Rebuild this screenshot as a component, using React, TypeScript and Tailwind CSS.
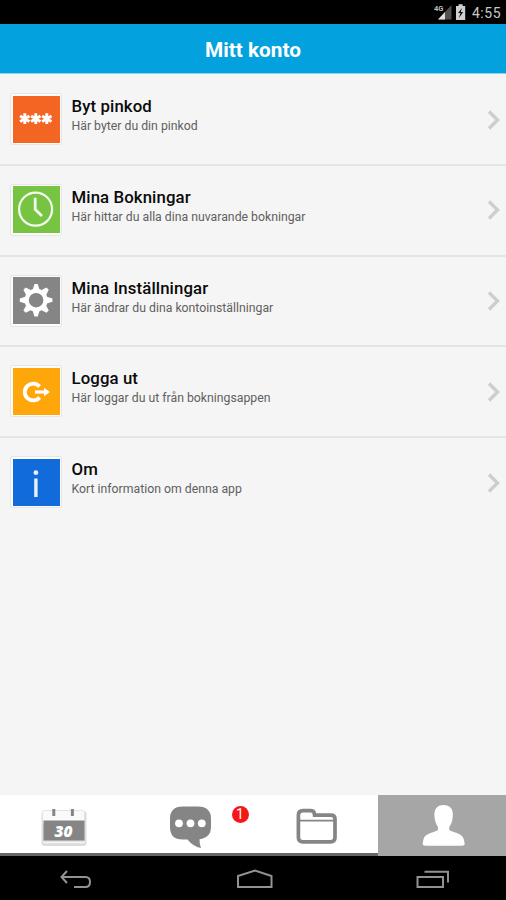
import React from "react";

type Item = { title: string; text: string; color: string; icon: React.ReactNode };

const Stars = () => (
  <svg viewBox="0 0 47 47" className="size-[47px]" stroke="#fff" strokeWidth="2.9">
    {[11.8, 22.8, 33.8].map((x) => (
      <path key={x} d={`M${x} 17.3v10.8M${x - 4.7} 20l9.4 5.4M${x - 4.7} 25.4l9.4-5.4`} />
    ))}
  </svg>
);

const Clock = () => (
  <svg viewBox="0 0 47 47" className="size-[47px]" fill="none" stroke="#f4fbef" strokeWidth="2.2">
    <circle cx="22.6" cy="23.2" r="16.5" />
    <path d="M22.2 11.7V23.5l6.8 6.6" strokeWidth="2.8" />
  </svg>
);

const Gear = () => (
  <svg viewBox="0 0 47 47" className="size-[47px]">
    <g fill="#fff" transform="translate(23.1 23.2)">
      {[0, 45, 90, 135, 180, 225, 270, 315].map((a) => (
        <path key={a} d="M-3.6-10L-1.6-16.3H1.6L3.6-10z" transform={`rotate(${a})`} />
      ))}
      <circle r="9.4" fill="none" stroke="#fff" strokeWidth="4.2" />
    </g>
  </svg>
);

const Logout = () => (
  <svg viewBox="0 0 47 47" className="size-[47px]" fill="none" stroke="#fff">
    <path d="M26.6 18.6A8.4 8.4 0 1 0 26.6 29.4" strokeWidth="3.9" />
    <path d="M22 24h10" strokeWidth="3.2" />
    <path d="M31 19.8l6 4.2-6 4.2z" fill="#fff" stroke="none" />
  </svg>
);

const Info = () => (
  <svg viewBox="0 0 47 47" className="size-[47px]" fill="#e6f1ff">
    <circle cx="22.9" cy="13.7" r="2.4" />
    <rect x="21.2" y="19.5" width="3.4" height="18.5" />
  </svg>
);

const items: Item[] = [
  { title: "Byt pinkod", text: "Här byter du din pinkod", color: "bg-[#f26522]", icon: <Stars /> },
  { title: "Mina Bokningar", text: "Här hittar du alla dina nuvarande bokningar", color: "bg-[#76c442]", icon: <Clock /> },
  { title: "Mina Inställningar", text: "Här ändrar du dina kontoinställningar", color: "bg-[#858585]", icon: <Gear /> },
  { title: "Logga ut", text: "Här loggar du ut från bokningsappen", color: "bg-[#ffa60a]", icon: <Logout /> },
  { title: "Om", text: "Kort information om denna app", color: "bg-[#116bdb]", icon: <Info /> },
];

const Row = ({ item, last }: { item: Item; last: boolean }) => (
  <li className={`flex h-[90.8px] items-start pl-[10px] pt-[18px] ${last ? "" : "border-b-2 border-[#e4e4e4]"}`}>
    <div className="size-[52px] shrink-0 rounded-[2px] border border-[#e6e6e6] bg-[#fcfcfc] pl-[2px] pt-[1.5px]">
      <div className={`size-[47px] ${item.color}`}>{item.icon}</div>
    </div>
    <div className="min-w-0 flex-1 whitespace-nowrap pl-[9.5px] pt-[3px]">
      <h2 className="text-[16.8px] font-medium leading-[20px] tracking-[0.1px] text-[#0a0a0a]">{item.title}</h2>
      <p className="text-[12.27px] leading-[20px] text-[#5f5f5f]">{item.text}</p>
    </div>
    <svg viewBox="0 0 14 22" className="mr-[5px] mt-[15.5px] h-[22px] w-[14px]" fill="none" stroke="#cecece" strokeWidth="3.4">
      <path d="M2 2.5l8.5 8.5L2 19.5" />
    </svg>
  </li>
);

const StatusBar = () => (
  <div className="flex h-6 shrink-0 items-center justify-end bg-black pr-[5px] text-[#c9c9c9]">
    <svg viewBox="0 0 36 20" className="h-[20px] w-[36px]">
      <path d="M17.5 3v14.5H4z" fill="#505050" />
      <path d="M11 10v7.5H4z" fill="#ddd" />
      <text x="0" y="9" fontSize="7.5" fontWeight="700" fill="#bbb">4G</text>
      <path d="M22 4h2.6V2.2h4V4h2.6v14H22z" fill="#d0d0d0" />
      <path d="M28 6l-4 5h2.4L25 16l4.2-6h-2.5z" fill="#111" />
    </svg>
    <span className="ml-[2px] pt-px text-[14px] leading-6 tracking-[0.5px]">4:55</span>
  </div>
);

const TabBar = () => (
  <nav className="flex h-[61px] shrink-0 bg-white">
    <div className="flex w-[378px] border-b-[3px] border-[#666]">
      <div className="flex w-[126px] justify-center pl-[2px] pt-[11px]">
        <svg viewBox="0 0 48 42" className="h-[42px] w-[48px]">
          <rect x="1.5" y="5" width="45" height="35" rx="3" fill="#dcdcdc" />
          <rect x="2.5" y="4.5" width="42" height="14" rx="2" fill="#fafafa" stroke="#e2e2e2" />
          <path d="M3.5 14.5h41V34.5h-41z" fill="#858585" />
          <path d="M3 36.5h42" stroke="#f5f5f5" strokeWidth="1.5" />
          <path d="M13.8 3v7M32.4 3v7" stroke="#858585" strokeWidth="3" />
          <text x="23.4" y="30.8" fontSize="15.5" fontWeight="900" fontStyle="italic" textAnchor="middle" fill="#fff" fontFamily="Open Sans, sans-serif">30</text>
        </svg>
      </div>
      <div className="relative flex w-[126px] justify-center pl-px pt-[11px]">
        <svg viewBox="0 0 44 44" className="h-[44px] w-[44px]">
          <path d="M14.5 .5H30Q43 .5 43 13V21Q43 31.5 31.5 33.2Q31.5 39 33 42Q25 40.5 19.5 33.5H14.5Q2 33.5 2 21V13Q2 .5 14.5 .5z" fill="#858585" />
          <g fill="#fff"><circle cx="11" cy="17.3" r="3.9" /><circle cx="22.5" cy="17.3" r="3.9" /><circle cx="33.8" cy="17.3" r="3.9" /></g>
        </svg>
        <span className="absolute left-[105.5px] top-[11px] flex size-[17px] items-center justify-center rounded-full bg-[#f51616] text-[14px] text-white">1</span>
      </div>
      <div className="flex w-[126px] justify-center pl-[4px] pt-[13px]">
        <svg viewBox="0 0 42 36" className="h-[36px] w-[42px]" fill="none" stroke="#858585">
          <path d="M2.4 7Q2.4 2.6 7 2.6H15Q18.4 2.6 18.6 7.2H35Q39 7.2 39 11V29.5Q39 33.8 34.5 33.8H7Q2.4 33.8 2.4 29.5z" strokeWidth="3.7" />
          <path d="M4 12.6h34" strokeWidth="1.7" />
        </svg>
      </div>
    </div>
    <div className="flex flex-1 justify-center bg-[#a6a6a6] pl-[4px] pt-[9px]">
      <svg viewBox="0 0 44 43" className="h-[43px] w-[44px]" fill="#fff">
        <path d="M21.5 1C28 1 31.5 5 30.8 12C30.6 17 29 20.5 27.3 23V26C30 28.5 40 28.5 41.7 35L42.8 40Q42.5 41.8 40 41.8H3.5Q.7 41.8 .5 40L1.5 35C3.5 28.5 13.5 28.5 16 26V23C14.3 20.5 12.7 17 12.4 12C12 5 15 1 21.5 1z" />
      </svg>
    </div>
  </nav>
);

const SystemBar = () => (
  <div className="flex h-11 shrink-0 items-start justify-between bg-black pl-[59px] pr-[56px] pt-[13px]">
    <svg viewBox="0 0 34 22" className="h-[22px] w-[34px]" fill="none" stroke="#929292" strokeWidth="2">
      <path d="M8 2L2.5 8l5.5 6M2.5 8H26.5Q31 8 31 13T26.5 18H15" />
    </svg>
    <svg viewBox="0 0 38 22" className="h-[22px] w-[38px]" fill="none" stroke="#929292" strokeWidth="2">
      <path d="M2 18V7L19 1.5 35.5 7v11z" />
    </svg>
    <svg viewBox="0 0 34 22" className="h-[22px] w-[34px]" fill="none" stroke="#929292" strokeWidth="2">
      <path d="M1.5 8H27v10H1.5zM8.5 2.8H33M32 2v11.5" />
    </svg>
  </div>
);

export default function App() {
  return (
    <div className="flex h-[900px] w-[506px] flex-col overflow-hidden bg-[#f5f5f5] font-[Roboto,sans-serif]">
      <StatusBar />
      <header className="flex h-[50px] shrink-0 items-center justify-center border-b border-[#8bd0ec] bg-[#03a1de] pt-[3px]">
        <h1 className="text-[20.8px] font-bold leading-6 text-white">Mitt konto</h1>
      </header>
      <main className="flex-1 pt-px">
        <ul>
          {items.map((item, i) => (
            <Row key={item.title} item={item} last={i === items.length - 1} />
          ))}
        </ul>
      </main>
      <TabBar />
      <SystemBar />
    </div>
  );
}
